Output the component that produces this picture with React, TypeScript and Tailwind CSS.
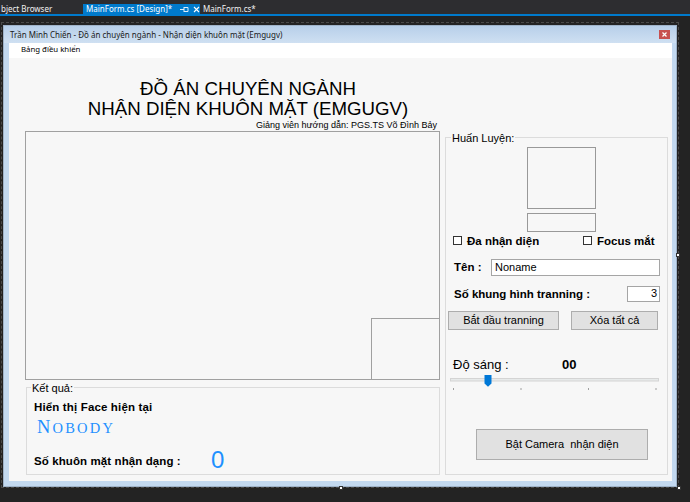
import React from 'react';

const sans = "font-['Liberation_Sans',Arial,sans-serif]";
const ui = "font-['Noto_Sans','Open_Sans',sans-serif]";

const WinButton = ({ label, className }: { label: string; className: string }) => (
  <button
    type="button"
    className={`flex items-center justify-center bg-[#e1e1e1] border border-[#adadad] text-[11px] leading-none whitespace-pre text-black ${className}`}
  >
    {label}
  </button>
);

const CheckBox = ({ label }: { label: string }) => (
  <div className="flex items-center gap-[5px]">
    <span className="w-[9px] h-[9px] border border-[#333] bg-white" />
    <span className="font-bold text-[11.5px] leading-[14px]">{label}</span>
  </div>
);

const Slider = () => (
  <svg width="209" height="17" viewBox="0 0 209 17" className="block">
    <rect x="0.5" y="4.5" width="208" height="2.5" fill="#e7eaea" stroke="#d4d4d4" />
    <path d="M34.5 1 H41.5 V9.5 L38 12.7 L34.5 9.5 Z" fill="#0078d7" />
    <rect x="3" y="14" width="1" height="2" fill="#a0a0a0" />
    <rect x="70.5" y="14" width="1" height="2" fill="#a0a0a0" />
    <rect x="138" y="14" width="1" height="2" fill="#a0a0a0" />
    <rect x="205.5" y="14" width="1" height="2" fill="#a0a0a0" />
  </svg>
);

const Handle = ({ className }: { className: string }) => (
  <div className={`absolute w-[4px] h-[4px] bg-white border border-[#333] ${className}`} />
);

export default function App() {
  return (
    <div className={`relative w-[690px] h-[502px] overflow-hidden bg-[#232323] text-black ${sans}`}>
      {/* VS document tabs */}
      <div className={`h-[14px] bg-[#2d2d30] flex items-end text-[8px] leading-none whitespace-nowrap ${ui}`}>
        <div className="h-[10px] w-[83px] flex items-center pl-[1px] text-[#f1f1f1]">bject Browser</div>
        <div className="h-[10px] w-[117px] bg-[#007acc] flex items-center pl-[3px] text-white">
          <span>MainForm.cs [Design]*</span>
          <svg width="9" height="7" viewBox="0 0 9 7" className="ml-[8px] shrink-0">
            <path d="M0 3.5 H4 M4 1 V6 M4 1.5 H8 M4 5.5 H8 M8 1.5 V5.5" stroke="#dfeefb" strokeWidth="1" fill="none" />
          </svg>
          <svg width="7" height="7" viewBox="0 0 7 7" className="ml-[4px] shrink-0">
            <path d="M1 1 L6 6 M6 1 L1 6" stroke="#ffffff" strokeWidth="1.1" />
          </svg>
        </div>
        <div className="h-[10px] w-[62px] flex items-center pl-[3px] text-[#f1f1f1]">MainForm.cs*</div>
      </div>
      <div className="h-[1.5px] bg-[#007acc]" />

      {/* designer selection frame */}
      <div className="ml-[1px] mt-[6px] w-[678px] border border-dashed border-[#4a4a4a] pt-[2px]">
        {/* the form window */}
        <div className="ml-[1px] w-[674px] border border-[#9fb3c9] bg-[#c3d9f0] pl-[5px] pr-[4px] pb-[5px]">
          {/* title bar */}
          <div className={`-ml-[5px] -mr-[4px] h-[17px] pt-[1px] flex items-center justify-between bg-gradient-to-b from-[#b7cfe9] to-[#cfe0f2] pl-[6px] pr-[6px] ${ui}`}>
            <span className="text-[8px] leading-none text-[#1a1a1a] whitespace-nowrap">
              Trần Minh Chiến - Đồ án chuyên ngành - Nhận diện khuôn mặt (Emgugv)
            </span>
            <div className="w-[11px] h-[9px] bg-[#c75050] flex items-center justify-center">
              <svg width="5" height="5" viewBox="0 0 5 5">
                <path d="M0.5 0.5 L4.5 4.5 M4.5 0.5 L0.5 4.5" stroke="#fff" strokeWidth="1.2" />
              </svg>
            </div>
          </div>

          {/* client area */}
          <div className="w-[663px]">
            <div className={`h-[15px] bg-white flex items-center pl-[12px] text-[7.8px] leading-none ${ui}`}>
              Bảng điều khiển
            </div>

            <div className="h-[423px] bg-[#f7f7f7] flex pl-[16px]">
              {/* left column */}
              <div className="w-[415px] flex flex-col">
                <div className="pt-[21px] pl-[31px] text-center text-[18.7px] leading-[20px]">
                  <div>ĐỒ ÁN CHUYÊN NGÀNH</div>
                  <div>NHẬN DIỆN KHUÔN MẶT (EMGUGV)</div>
                </div>
                <div className="text-right pr-[3px] text-[9px] leading-[12px]">
                  Giảng viên hướng dẫn: PGS.TS Võ Đình Bảy
                </div>

                <div className="h-[249px] border border-[#a0a0a0] flex flex-col justify-end items-end">
                  <div className="w-[68px] h-[61px] border-l border-t border-[#a0a0a0]" />
                </div>

                <fieldset className="mt-[2px] ml-[1px] w-[414px] h-[93px] border border-[#dcdcdc]">
                  <legend className="ml-[4px] px-[1px] text-[11px] leading-[12px]">Kết quả:</legend>
                  <div className="pl-[7px] pt-[6px] flex flex-col">
                    <div className="font-bold text-[11.5px] leading-[14px] tracking-[0.15px]">Hiển thị Face hiện tại</div>
                    <div className="mt-[3px] pl-[3px] flex items-baseline font-['Liberation_Serif',serif] leading-[20px] text-[#1e90ff] tracking-[2.2px]">
                      <span className="text-[18.5px]">N</span>
                      <span className="text-[14.5px]">OBODY</span>
                    </div>
                    <div className="mt-[14px] flex items-end">
                      <div className="w-[177px] font-bold text-[11.5px] leading-[14px] tracking-[0.1px]">Số khuôn mặt nhận dạng :</div>
                      <div className="text-[24px] leading-[16px] text-[#1e90ff]">0</div>
                    </div>
                  </div>
                </fieldset>
              </div>

              {/* right column */}
              <div className="ml-[5px] w-[223px] pt-[74px]">
                <fieldset className="w-[223px] h-[343px] border border-[#dcdcdc]">
                  <legend className="ml-[5px] px-[1px] text-[11px] leading-[12px]">Huấn Luyện:</legend>
                  <div className="flex flex-col">
                    <div className="mt-[3px] ml-[81px] w-[69px] h-[62px] border border-[#999] bg-[#f7f7f7]" />
                    <div className="mt-[4px] ml-[81px] w-[69px] h-[19px] border border-[#999]" />

                    <div className="mt-[2px] pl-[7px] flex">
                      <div className="w-[130px]">
                        <CheckBox label="Đa nhận diện" />
                      </div>
                      <CheckBox label="Focus mắt" />
                    </div>

                    <div className="mt-[11px] pl-[8px] pr-[7px] flex items-center">
                      <div className="w-[37px] font-bold text-[11.5px] leading-[14px]">Tên :</div>
                      <div className="flex-1 h-[17px] border border-[#a5a5a5] bg-white flex items-center pl-[3px] text-[11px] leading-none">
                        Noname
                      </div>
                    </div>

                    <div className="mt-[10px] pl-[8px] pr-[7px] flex items-center justify-between">
                      <div className="font-bold text-[11.5px] leading-[14px]">Số khung hình tranning :</div>
                      <div className="w-[33px] h-[16px] border border-[#a5a5a5] bg-white flex items-center justify-end pr-[2px] text-[11px] leading-none">
                        3
                      </div>
                    </div>

                    <div className="mt-[9px] pl-[2px] flex gap-[12px]">
                      <WinButton label="Bắt đầu tranning" className="w-[111px] h-[19px]" />
                      <WinButton label="Xóa tất cả" className="w-[87px] h-[19px]" />
                    </div>

                    <div className="mt-[27px] pl-[7px] flex text-[13px] leading-[15px]">
                      <div className="w-[109px]">Độ sáng :</div>
                      <div className="font-bold">00</div>
                    </div>

                    <div className="mt-[2px] ml-[4px]">
                      <Slider />
                    </div>

                    <div className="mt-[38px] ml-[30px]">
                      <WinButton label="Bật Camera  nhận diện" className="w-[172px] h-[31px]" />
                    </div>
                  </div>
                </fieldset>
              </div>
            </div>
          </div>
        </div>
      </div>

      <Handle className="left-[676px] top-[253px]" />
      <Handle className="left-[339px] top-[486px]" />
      <Handle className="left-[677px] top-[486px]" />
    </div>
  );
}
